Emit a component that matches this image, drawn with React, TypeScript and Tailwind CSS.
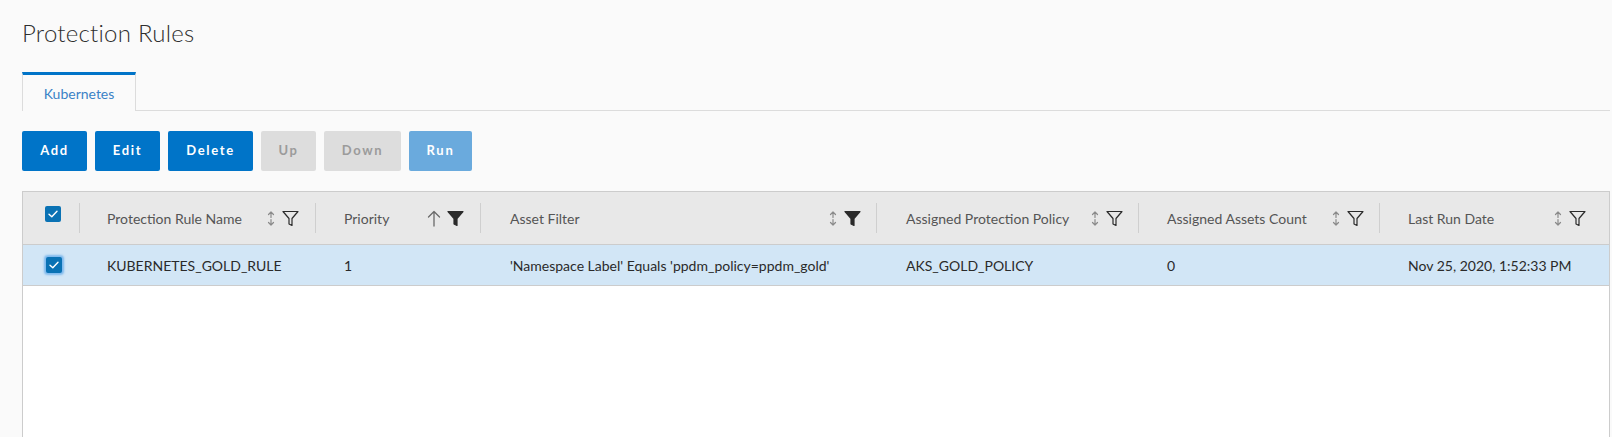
import React from "react";

const SortIcon = () => (
  <svg width="10" height="15" viewBox="0 0 10 15" fill="none" stroke="#8a8a8a" strokeWidth="1.2" strokeLinecap="round" strokeLinejoin="round">
    <path d="M5 1 V6.5 M2.5 3.5 L5 1 L7.5 3.5" />
    <path d="M5 8.5 V14 M2.5 11.5 L5 14 L7.5 11.5" />
  </svg>
);

const FilterIcon = ({ filled }: { filled?: boolean }) => (
  <svg width="17" height="17" viewBox="0 0 17 17" fill={filled ? "#2b2b2b" : "none"} stroke="#2b2b2b" strokeWidth="1.2" strokeLinejoin="round">
    <path d="M1 1.5 H16 L10 8.5 V15.5 L7 14 V8.5 Z" />
  </svg>
);

const UpArrow = () => (
  <svg width="14" height="17" viewBox="0 0 14 17" fill="none" stroke="#6a6a6a" strokeWidth="1.3" strokeLinecap="round" strokeLinejoin="round">
    <path d="M7 1.5 V16 M1.5 7 L7 1.5 L12.5 7" />
  </svg>
);

const Check = ({ glow }: { glow?: boolean }) => (
  <div
    className={
      "flex h-4 w-4 items-center justify-center rounded-[2px] bg-[#0a72b4] " +
      (glow ? "shadow-[0_0_2px_2px_rgba(60,150,230,0.55)]" : "")
    }
  >
    <svg width="10" height="8" viewBox="0 0 10 8" fill="none" stroke="#ffffff" strokeWidth="1.4" strokeLinecap="round" strokeLinejoin="round">
      <path d="M1 4.2 L3.8 6.8 L9 1.2" />
    </svg>
  </div>
);

type Col = {
  title: string;
  w: string;
  pl: string;
  pr: string;
  icons: React.ReactNode;
  divider: boolean;
  value: string;
};

const cols: Col[] = [
  {
    title: "Protection Rule Name",
    w: "w-[236px]",
    pl: "pl-[27px]",
    pr: "pr-[16px]",
    icons: (
      <>
        <SortIcon />
        <FilterIcon />
      </>
    ),
    divider: true,
    value: "KUBERNETES_GOLD_RULE",
  },
  {
    title: "Priority",
    w: "w-[165px]",
    pl: "pl-[28px]",
    pr: "pr-[16px]",
    icons: (
      <>
        <UpArrow />
        <FilterIcon filled />
      </>
    ),
    divider: true,
    value: "1",
  },
  {
    title: "Asset Filter",
    w: "w-[396px]",
    pl: "pl-[29px]",
    pr: "pr-[15px]",
    icons: (
      <>
        <SortIcon />
        <FilterIcon filled />
      </>
    ),
    divider: true,
    value: "'Namespace Label' Equals 'ppdm_policy=ppdm_gold'",
  },
  {
    title: "Assigned Protection Policy",
    w: "w-[262px]",
    pl: "pl-[29px]",
    pr: "pr-[15px]",
    icons: (
      <>
        <SortIcon />
        <FilterIcon />
      </>
    ),
    divider: true,
    value: "AKS_GOLD_POLICY",
  },
  {
    title: "Assigned Assets Count",
    w: "w-[241px]",
    pl: "pl-[28px]",
    pr: "pr-[15px]",
    icons: (
      <>
        <SortIcon />
        <FilterIcon />
      </>
    ),
    divider: true,
    value: "0",
  },
  {
    title: "Last Run Date",
    w: "flex-1",
    pl: "pl-[28px]",
    pr: "pr-[23px]",
    icons: (
      <>
        <SortIcon />
        <FilterIcon />
      </>
    ),
    divider: false,
    value: "Nov 25, 2020, 1:52:33 PM",
  },
];

const Btn = ({ label, kind, w }: { label: string; kind: "primary" | "disabled" | "light"; w: string }) => {
  const cls =
    kind === "primary"
      ? "bg-[#0074c8] text-white"
      : kind === "light"
      ? "bg-[#6aaadd] text-white"
      : "bg-[#dddddd] text-[#9b9b9b]";
  return (
    <div className={`flex h-10 items-center justify-center rounded-[2px] text-[13px] font-bold tracking-[0.13em] ${cls} ${w}`}>
      {label}
    </div>
  );
};

export default function App() {
  return (
    <div
      className="h-[437px] overflow-hidden bg-[#fafafa] pl-[22px] pr-[2px] text-[#333333]"
      style={{ fontFamily: "Lato, 'Open Sans', sans-serif" }}
    >
      <h1 className="pt-[18px] text-[24px] font-light leading-[30px] tracking-[0.01em] text-[#2e2e2e]">Protection Rules</h1>

      <div className="mt-[24px] flex items-end border-b border-[#dcdcdc]">
        <div className="-mb-px flex h-[39px] w-[114px] items-center justify-center border-x border-t-[3px] border-x-[#dcdcdc] border-t-[#0074c8] bg-[#fafafa] text-[14px] text-[#3a82c6]">
          Kubernetes
        </div>
      </div>

      <div className="mt-[20px] flex gap-2">
        <Btn label="Add" kind="primary" w="w-[65px]" />
        <Btn label="Edit" kind="primary" w="w-[65px]" />
        <Btn label="Delete" kind="primary" w="w-[85px]" />
        <Btn label="Up" kind="disabled" w="w-[55px]" />
        <Btn label="Down" kind="disabled" w="w-[77px]" />
        <Btn label="Run" kind="light" w="w-[63px]" />
      </div>

      <div className="mt-[20px] border border-[#cccccc] bg-white text-[14px]">
        <div className="flex h-[53px] items-center border-b border-[#cccccc] bg-[#e8e8e8] text-[#555555]">
          <div className="flex w-[57px] items-center self-stretch">
            <div className="flex flex-1 justify-center pl-[4px] pb-[8px]">
              <Check />
            </div>
            <div className="h-[30px] w-px bg-[#cfcfcf]" />
          </div>
          {cols.map((c) => (
            <div key={c.title} className={`flex items-center ${c.w}`}>
              <div className={`flex flex-1 items-center justify-between ${c.pl} ${c.pr}`}>
                <span>{c.title}</span>
                <span className="flex items-center gap-[6px]">{c.icons}</span>
              </div>
              {c.divider && <div className="h-[30px] w-px bg-[#cfcfcf]" />}
            </div>
          ))}
        </div>

        <div className="flex h-[41px] items-center border-b border-[#cccccc] bg-[#d2e6f6] text-[#2a2a2a]">
          <div className="flex w-[57px] justify-center pl-[4px]">
            <Check glow />
          </div>
          {cols.map((c) => (
            <div key={c.title} className={`${c.w} ${c.pl}`}>
              {c.value}
            </div>
          ))}
        </div>

        <div className="h-[200px]" />
      </div>
    </div>
  );
}
